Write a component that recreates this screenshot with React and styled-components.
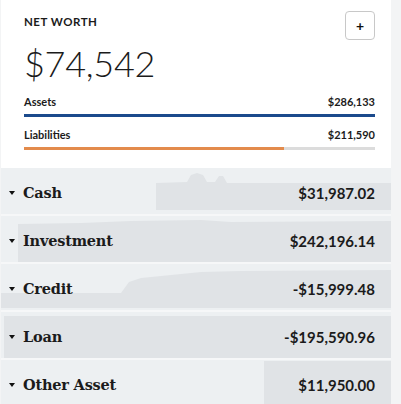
import React from "react";
import styled, { createGlobalStyle } from "styled-components";

const GlobalStyle = createGlobalStyle`
  html, body {
    margin: 0;
    padding: 0;
    background: #f3f4f5;
  }
  body {
    font-family: Lato, "Noto Sans", sans-serif;
    color: #1b1b1b;
  }
`;

const Tarjeta = styled.div`
  width: 390px;
  height: 404px;
  margin-left: 1px;
  background: #ffffff;
  overflow: hidden;
  display: flex;
  flex-direction: column;
`;

const Encabezado = styled.div`
  height: 168px;
  flex-shrink: 0;
  box-sizing: border-box;
  padding: 11px 16px 0 23px;
  display: flex;
  flex-direction: column;
`;

const FilaTitulo = styled.div`
  display: flex;
  justify-content: space-between;
  align-items: flex-start;
`;

const Titulo = styled.div`
  font-size: 11.5px;
  font-weight: 700;
  letter-spacing: 0.5px;
  margin-top: 4px;
`;

const BotonMas = styled.button`
  width: 30px;
  height: 29px;
  border: 1px solid #c8c8c8;
  border-radius: 4px;
  background: #fff;
  font-family: Lato, sans-serif;
  font-size: 14px;
  font-weight: 700;
  color: #111;
  padding: 0;
  line-height: 1;
`;

const Total = styled.div`
  font-size: 36px;
  font-weight: 300;
  letter-spacing: -0.3px;
  line-height: 44px;
  margin-top: 1px;
`;

const Linea = styled.div`
  display: flex;
  justify-content: space-between;
  align-items: baseline;
  font-size: 11px;
  font-weight: 700;
  margin-top: ${(p) => p.mt}px;
`;

const Barra = styled.div`
  height: 3px;
  margin-top: 6px;
  background: #dcdcdc;
`;

const Relleno = styled.div`
  height: 100%;
  background: ${(p) => p.color};
`;

const Lista = styled.div`
  display: flex;
  flex-direction: column;
  gap: 2px;
  background: #f6f7f8;
  flex: 1;
`;

const Fila = styled.div`
  position: relative;
  height: 46px;
  flex-shrink: 0;
  box-sizing: border-box;
  background: #edf0f2;
  display: flex;
  align-items: center;
  padding: 3px 16px 0 8px;
`;

const Grafica = styled.svg`
  position: absolute;
  inset: 0;
  width: 100%;
  height: 100%;
`;

const Flecha = styled.span`
  position: relative;
  width: 0;
  height: 0;
  border-left: 3.5px solid transparent;
  border-right: 3.5px solid transparent;
  border-top: 4px solid #111;
  margin-right: 8px;
`;

const Nombre = styled.span`
  position: relative;
  font-family: "DejaVu Serif", serif;
  font-weight: 700;
  font-size: 14.5px;
  letter-spacing: -0.2px;
  flex: 1;
`;

const Monto = styled.span`
  position: relative;
  font-family: Lato, sans-serif;
  font-weight: 700;
  font-size: 15px;
`;

const cuentas = [
  {
    nombre: "Cash",
    monto: "$31,987.02",
    area: "M143,46 L143,42 L155,42 L155,15 L186,14 L190,7 L196,5 L202,7 L206,14 L214,14 L218,8 L222,8 L226,15 L390,15 L390,42 L143,42 Z",
  },
  {
    nombre: "Investment",
    monto: "$242,196.14",
    area: "M17,46 L17,8 L80,7 L130,5 L200,4 L230,6 L390,5 L390,46 Z",
  },
  {
    nombre: "Credit",
    monto: "-$15,999.48",
    area: "M0,44 L0,29 L120,29 L128,18 L140,14 L200,8 L240,7 L390,6 L390,44 Z",
  },
  {
    nombre: "Loan",
    monto: "-$195,590.96",
    area: "M3,46 L3,4 L390,4 L390,46 Z",
  },
  {
    nombre: "Other Asset",
    monto: "$11,950.00",
    area: "M263,46 L263,1 L390,1 L390,46 Z",
  },
];

const App = () => {
  return (
    <>
      <GlobalStyle />
      <Tarjeta>
        <Encabezado>
          <FilaTitulo>
            <Titulo>NET WORTH</Titulo>
            <BotonMas>+</BotonMas>
          </FilaTitulo>
          <Total>$74,542</Total>
          <Linea mt={10}>
            <span>Assets</span>
            <span>$286,133</span>
          </Linea>
          <Barra>
            <Relleno color="#1b4a8c" style={{ width: "100%" }} />
          </Barra>
          <Linea mt={11}>
            <span>Liabilities</span>
            <span>$211,590</span>
          </Linea>
          <Barra>
            <Relleno color="#e38b4c" style={{ width: `${(211590 / 286133) * 100}%` }} />
          </Barra>
        </Encabezado>
        <Lista>
          {cuentas.map((c) => (
            <Fila key={c.nombre}>
              <Grafica viewBox="0 0 390 46" preserveAspectRatio="none">
                <path d={c.area} fill="#e0e3e6" />
              </Grafica>
              <Flecha />
              <Nombre>{c.nombre}</Nombre>
              <Monto>{c.monto}</Monto>
            </Fila>
          ))}
        </Lista>
      </Tarjeta>
    </>
  );
};

export default App;
